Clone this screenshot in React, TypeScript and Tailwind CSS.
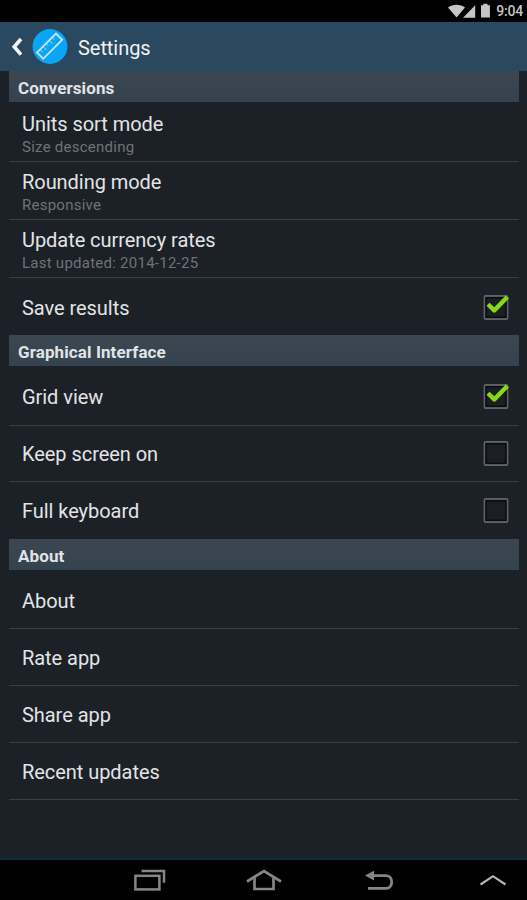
import React, { useState } from 'react';
import clsx from 'clsx';

interface SettingItem {
  title: string;
  summary?: string;
  checked?: boolean;
  className: string;
}

interface SettingSection {
  title: string;
  items: SettingItem[];
}

const sections: SettingSection[] = [
  {
    title: 'Conversions',
    items: [
      { title: 'Units sort mode', summary: 'Size descending', className: 'h-[60px] border-b pt-2' },
      { title: 'Rounding mode', summary: 'Responsive', className: 'h-[58px] border-b pt-1.5' },
      { title: 'Update currency rates', summary: 'Last updated: 2014-12-25', className: 'h-[58px] border-b pt-1.5' },
      { title: 'Save results', checked: true, className: 'h-[57px] pt-4' }
    ]
  },
  {
    title: 'Graphical Interface',
    items: [
      { title: 'Grid view', checked: true, className: 'h-[60px] border-b pt-[17px]' },
      { title: 'Keep screen on', checked: false, className: 'h-14 border-b pt-[14px]' },
      { title: 'Full keyboard', checked: false, className: 'h-[57px] pt-[15px]' }
    ]
  },
  {
    title: 'About',
    items: [
      { title: 'About', className: 'h-[59px] border-b pt-[17px]' },
      { title: 'Rate app', className: 'h-[57px] border-b pt-[15px]' },
      { title: 'Share app', className: 'h-[57px] border-b pt-[15px]' },
      { title: 'Recent updates', className: 'h-[57px] border-b pt-[15px]' }
    ]
  }
];

function StatusBar() {
  return (
    <div className="flex h-[22px] items-center justify-end bg-black pr-1 text-[#c6c6c6]">
      <svg width="44" height="16" viewBox="0 0 44 16" fill="currentColor">
        <path d="M0 4.6C5 0.8 12 0.8 17 4.6L8.5 14.5Z" />
        <path d="M15 14.8L27.2 2.2V14.8Z" />
        <path d="M33 2.2h2.3V0.8h4.2v1.4h2.4V14.6H33Z" />
      </svg>
      <span className="ml-1 text-[14px] leading-[22px] font-medium tracking-[-0.2px]">9:04</span>
    </div>
  );
}

function AppIcon() {
  return (
    <svg className="ml-[9px]" width="36" height="36" viewBox="0 0 36 36" fill="none">
      <circle cx="18" cy="17.5" r="17.4" fill="#0aa5f5" />
      <g transform="rotate(-45 17.6 17.2)" stroke="#bfe8ff">
        <rect x="4.2" y="12.8" width="26.8" height="8.8" strokeWidth="1.8" />
        <path d="M8.5 13v3M12.8 13v4.5M17.1 13v3M21.4 13v4.5M25.7 13v3" strokeWidth="1" opacity="0.6" />
      </g>
    </svg>
  );
}

function CheckBox({ checked }: { checked: boolean }) {
  return (
    <svg className="-mt-0.5" width="30" height="30" viewBox="0 0 30 30" fill="none">
      <rect x="3.5" y="4" width="23" height="23" rx="1" fill="#1b1f22" stroke="#606366" strokeWidth="1.8" />
      <rect x="5.2" y="5.7" width="19.6" height="19.6" stroke="#0b0d10" strokeWidth="1.6" />
      {checked && <path d="M7 12.2L13.3 18.4L26.3 5" stroke="#86d91a" strokeWidth="4.4" strokeLinejoin="round" />}
    </svg>
  );
}

function SettingRow({ item, onToggle }: { item: SettingItem; onToggle: () => void }) {
  return (
    <div className={clsx('flex justify-between border-[#3b3f41] pr-2 pl-[13px]', item.className)} onClick={onToggle}>
      <div>
        <p className="text-[20px] leading-7 tracking-[-0.05px] text-[#e3e4e5]">{item.title}</p>
        {item.summary && (
          <p className="text-[15px] leading-[18px] tracking-[0.25px] text-[#707376]">{item.summary}</p>
        )}
      </div>
      {item.checked !== undefined && <CheckBox checked={item.checked} />}
    </div>
  );
}

function NavBar() {
  return (
    <div className="flex h-[42px] items-center border-t-2 border-[#0b2f3c] bg-black pl-[132px] text-[#858585]">
      <svg width="34" height="26" viewBox="0 0 34 26" fill="none" stroke="currentColor" strokeWidth="2.5">
        <rect x="3.4" y="8.8" width="24" height="13.6" />
        <path d="M9.5 4H32V15.8" />
      </svg>
      <svg className="ml-[79px]" width="38" height="26" viewBox="0 0 38 26" fill="none" stroke="currentColor" strokeWidth="2.7">
        <path d="M2 14.5L19 4L36 14.5" />
        <path d="M9.5 10V22H28.5V10" />
      </svg>
      <svg className="ml-[81px]" width="32" height="26" viewBox="0 0 32 26" fill="none">
        <path d="M8 8.6H22C29.6 8.6 29.6 21.4 22 21.4H4" stroke="currentColor" strokeWidth="2.8" />
        <path d="M1 8.6L10 3.8V13.4Z" fill="currentColor" />
      </svg>
      <svg className="ml-[83px]" width="30" height="26" viewBox="0 0 30 26" fill="none" stroke="#b5b5b5" strokeWidth="2.2">
        <path d="M1.5 17.5L14 9.2L26.5 17.5" />
      </svg>
    </div>
  );
}

export default function App() {
  const [data, setData] = useState(sections);

  const toggleItem = (title: string) => {
    setData(data.map((section) => ({
      ...section,
      items: section.items.map((item) =>
        item.title === title && item.checked !== undefined ? { ...item, checked: !item.checked } : item
      )
    })));
  };

  return (
    <div className="flex h-[900px] w-[527px] flex-col overflow-hidden bg-[#1c2027] font-[Roboto,sans-serif]">
      <StatusBar />

      {/* Action bar */}
      <div className="flex h-[49px] items-center bg-[#2a485f] pl-[11px]">
        <svg width="12" height="20" viewBox="0 0 12 20" fill="none" stroke="#f2f4f5" strokeWidth="3.6">
          <path d="M10 2L3.2 9.8L10 17.6" />
        </svg>
        <AppIcon />
        <h1 className="ml-[10px] pt-0.5 text-[20px] tracking-[-0.05px] text-[#f0f2f3]">Settings</h1>
      </div>

      {/* Preference list */}
      <div className="mr-2 ml-[9px] flex-1">
        {data.map((section) => (
          <section key={section.title}>
            <h2 className="h-[31px] bg-linear-to-b from-[#3b4650] to-[#354350] pt-0.5 pl-[9px] text-[17px] leading-[31px] font-bold tracking-[0.1px] text-[#e0e4e7]">
              {section.title}
            </h2>
            {section.items.map((item) => (
              <SettingRow key={item.title} item={item} onToggle={() => toggleItem(item.title)} />
            ))}
          </section>
        ))}
      </div>

      <NavBar />
    </div>
  );
}
